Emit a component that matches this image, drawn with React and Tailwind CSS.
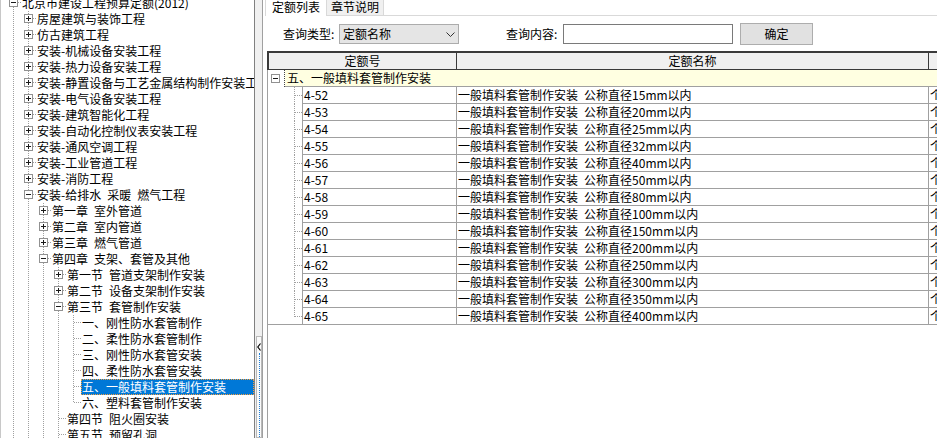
import React from "react";

const tree = [
  { l: 0, k: "minus", t: "北京市建设工程预算定额(2012)", n: true, a: [] },
  { l: 1, k: "plus", t: "房屋建筑与装饰工程", n: true, a: [0] },
  { l: 1, k: "plus", t: "仿古建筑工程", n: true, a: [0] },
  { l: 1, k: "plus", t: "安装-机械设备安装工程", n: true, a: [0] },
  { l: 1, k: "plus", t: "安装-热力设备安装工程", n: true, a: [0] },
  { l: 1, k: "plus", t: "安装-静置设备与工艺金属结构制作安装工程", n: true, a: [0] },
  { l: 1, k: "plus", t: "安装-电气设备安装工程", n: true, a: [0] },
  { l: 1, k: "plus", t: "安装-建筑智能化工程", n: true, a: [0] },
  { l: 1, k: "plus", t: "安装-自动化控制仪表安装工程", n: true, a: [0] },
  { l: 1, k: "plus", t: "安装-通风空调工程", n: true, a: [0] },
  { l: 1, k: "plus", t: "安装-工业管道工程", n: true, a: [0] },
  { l: 1, k: "plus", t: "安装-消防工程", n: true, a: [0] },
  { l: 1, k: "minus", t: "安装-给排水\u2002采暖\u2002燃气工程", n: true, a: [0] },
  { l: 2, k: "plus", t: "第一章\u2002室外管道", n: true, a: [0, 1] },
  { l: 2, k: "plus", t: "第二章\u2002室内管道", n: true, a: [0, 1] },
  { l: 2, k: "plus", t: "第三章\u2002燃气管道", n: true, a: [0, 1] },
  { l: 2, k: "minus", t: "第四章\u2002支架、套管及其他", n: true, a: [0, 1] },
  { l: 3, k: "plus", t: "第一节\u2002管道支架制作安装", n: true, a: [0, 1, 2] },
  { l: 3, k: "plus", t: "第二节\u2002设备支架制作安装", n: true, a: [0, 1, 2] },
  { l: 3, k: "minus", t: "第三节\u2002套管制作安装", n: true, a: [0, 1, 2] },
  { l: 4, k: "leaf", t: "一、刚性防水套管制作", n: true, a: [0, 1, 2, 3] },
  { l: 4, k: "leaf", t: "二、柔性防水套管制作", n: true, a: [0, 1, 2, 3] },
  { l: 4, k: "leaf", t: "三、刚性防水套管安装", n: true, a: [0, 1, 2, 3] },
  { l: 4, k: "leaf", t: "四、柔性防水套管安装", n: true, a: [0, 1, 2, 3] },
  { l: 4, k: "leaf", t: "五、一般填料套管制作安装", n: true, a: [0, 1, 2, 3], sel: true },
  { l: 4, k: "leaf", t: "六、塑料套管制作安装", n: false, a: [0, 1, 2, 3] },
  { l: 3, k: "leaf", t: "第四节\u2002阻火圈安装", n: true, a: [0, 1, 2] },
  { l: 3, k: "leaf", t: "第五节\u2002预留孔洞", n: true, a: [0, 1, 2] },
];

const rows = [
  ["4-52", "15"],
  ["4-53", "20"],
  ["4-54", "25"],
  ["4-55", "32"],
  ["4-56", "40"],
  ["4-57", "50"],
  ["4-58", "80"],
  ["4-59", "100"],
  ["4-60", "150"],
  ["4-61", "200"],
  ["4-62", "250"],
  ["4-63", "300"],
  ["4-64", "350"],
  ["4-65", "400"],
];

function Box({ x, y, kind }) {
  return (
    <g shapeRendering="crispEdges">
      <rect x={x + 0.5} y={y + 0.5} width={8} height={8} fill="#fff" stroke="#919191" />
      <line x1={x + 2} y1={y + 4.5} x2={x + 7} y2={y + 4.5} stroke="#1a1a1a" />
      {kind === "plus" && (
        <line x1={x + 4.5} y1={y + 2} x2={x + 4.5} y2={y + 7} stroke="#1a1a1a" />
      )}
    </g>
  );
}

function TreeGlyph({ level, kind, hasNext, anc }) {
  const w = 20 + 15 * level;
  const cx = (l) => 12.5 + 15 * l;
  return (
    <svg width={w} height={16} className="block shrink-0">
      <g stroke="#a0a0a0" strokeDasharray="1 1" fill="none" shapeRendering="crispEdges">
        {anc.map((l) => (
          <line key={l} x1={cx(l)} y1={0} x2={cx(l)} y2={16} />
        ))}
        <line x1={cx(level)} y1={0} x2={cx(level)} y2={hasNext ? 16 : 8} />
        <line x1={cx(level)} y1={7.5} x2={w} y2={7.5} />
      </g>
      {kind !== "leaf" && <Box x={8 + 15 * level} y={3} kind={kind} />}
    </svg>
  );
}

function TreeRow({ item }) {
  return (
    <div className="flex h-[16px] whitespace-nowrap">
      <TreeGlyph level={item.l} kind={item.k} hasNext={item.n} anc={item.a} />
      {item.sel ? (
        <div className="flex-1 h-[16px] pl-[1px] bg-[#0078d7] text-white outline-1 outline-dotted outline-[#f5a040] -outline-offset-1 leading-[16px]">
          {item.t}
        </div>
      ) : (
        <div className="pl-[1px] leading-[16px]">{item.t}</div>
      )}
    </div>
  );
}

function GridRow({ code, dia, last }) {
  return (
    <div className="flex h-[17px] border-l border-[#a0a0a0] shrink-0">
      <svg width={34} height={17} className="block shrink-0">
        <g stroke="#a0a0a0" strokeDasharray="1 1" fill="none" shapeRendering="crispEdges">
          <line x1={26.5} y1={0} x2={26.5} y2={last ? 9 : 17} />
          <line x1={26.5} y1={8.5} x2={34} y2={8.5} />
        </g>
        {last && (
          <line x1={0} y1={16.5} x2={34} y2={16.5} stroke="#a0a0a0" shapeRendering="crispEdges" />
        )}
      </svg>
      <div className="flex flex-1 border-b border-[#a0a0a0] leading-[16px] whitespace-nowrap">
        <div className="w-[155px] shrink-0 border-l border-r border-[#a0a0a0] pl-[1px]">{code}</div>
        <div className="w-[472px] shrink-0 border-r border-[#a0a0a0] pl-[1px]">
          一般填料套管制作安装{"\u2002"}公称直径{dia}mm以内
        </div>
        <div className="flex-1 pl-[1px] overflow-hidden">个</div>
      </div>
    </div>
  );
}

export default function App() {
  return (
    <div className="w-[937px] h-[438px] overflow-hidden flex bg-white text-black text-[12px] leading-[16px] font-['Noto_Sans_CJK_SC',sans-serif]">
      {/* left tree */}
      <div className="w-[255px] h-full shrink-0 overflow-hidden border-l border-l-[#c8c8c8] border-r border-r-[#808080] bg-white">
        <div className="-mt-[5px]">
          {tree.map((item, i) => (
            <TreeRow key={i} item={item} />
          ))}
        </div>
      </div>

      {/* splitter */}
      <div className="w-[8px] h-full shrink-0 bg-[#f0f0f0] border-r border-[#a0a0a0] flex flex-col">
        <div className="mt-[336px] flex-1 ml-[1px] w-[6px] border border-[#b9b9b9] bg-[#fafafa] flex flex-col items-center pt-[6px]">
          <svg width="4" height="8" className="block">
            <path d="M3.5 0.5 L0.8 4 L3.5 7.5" stroke="#000" strokeWidth="1.2" fill="none" />
          </svg>
          <div className="flex-1 mt-[2px] border-l border-dotted border-[#1e7fd8]" />
        </div>
      </div>

      {/* right panel */}
      <div className="flex-1 min-w-0 h-full flex flex-col">
        {/* tabs */}
        <div className="flex h-[16px] ml-[2px] shrink-0">
          <div className="w-[61px] border-l border-[#d9d9d9] pl-[6px] leading-[14px]">定额列表</div>
          <div className="w-[58px] h-[16px] bg-[#f0f0f0] border border-t-0 border-[#d9d9d9] text-center leading-[14px]">
            章节说明
          </div>
          <div className="flex-1 border-b border-[#d9d9d9]" />
        </div>

        {/* query row */}
        <div className="flex items-center h-[20px] mt-[8px] pl-[20px] shrink-0 whitespace-nowrap">
          <span className="w-[56px] shrink-0">查询类型:</span>
          <div className="w-[120px] h-[20px] shrink-0 border border-[#acacac] bg-[#e5e5e5] flex items-center pl-[3px] pr-[3px]">
            <span>定额名称</span>
            <svg width="9" height="5" className="block ml-auto">
              <path d="M0.5 0.5 L4.5 4.5 L8.5 0.5" stroke="#333" fill="none" />
            </svg>
          </div>
          <span className="ml-[47px] w-[57px] shrink-0">查询内容:</span>
          <div className="w-[170px] h-[20px] shrink-0 border border-[#7a7a7a] bg-white" />
          <div className="ml-[7px] w-[73px] h-[22px] shrink-0 bg-[#e1e1e1] border border-[#adadad] flex items-center justify-center">
            确定
          </div>
        </div>

        {/* grid */}
        <div className="flex-1 min-h-0 flex flex-col mt-[7px] ml-[4px]">
          <div className="flex h-[19px] shrink-0 border-t-2 border-l-2 border-b border-[#3a3a3a] bg-[#f0f0f0] leading-[16px]">
            <div className="w-[188px] shrink-0 border-r border-[#3a3a3a] text-center">定额号</div>
            <div className="w-[472px] shrink-0 border-r border-[#3a3a3a] text-center">定额名称</div>
            <div className="flex-1" />
          </div>

          <div className="flex h-[17px] shrink-0 border-l border-[#a0a0a0]">
            <svg width={17} height={17} className="block shrink-0">
              <Box x={3} y={4} kind="minus" />
              <line x1={16.5} y1={0} x2={16.5} y2={17} stroke="#444" strokeDasharray="1 1" shapeRendering="crispEdges" />
            </svg>
            <div className="flex-1 bg-[#ffffe1] border-b border-[#a0a0a0] pl-[2px] leading-[16px] whitespace-nowrap">
              五、一般填料套管制作安装
            </div>
          </div>

          {rows.map(([code, dia], i) => (
            <GridRow key={code} code={code} dia={dia} last={i === rows.length - 1} />
          ))}

          <div className="flex-1 border-l border-[#a0a0a0]" />
        </div>
      </div>
    </div>
  );
}
